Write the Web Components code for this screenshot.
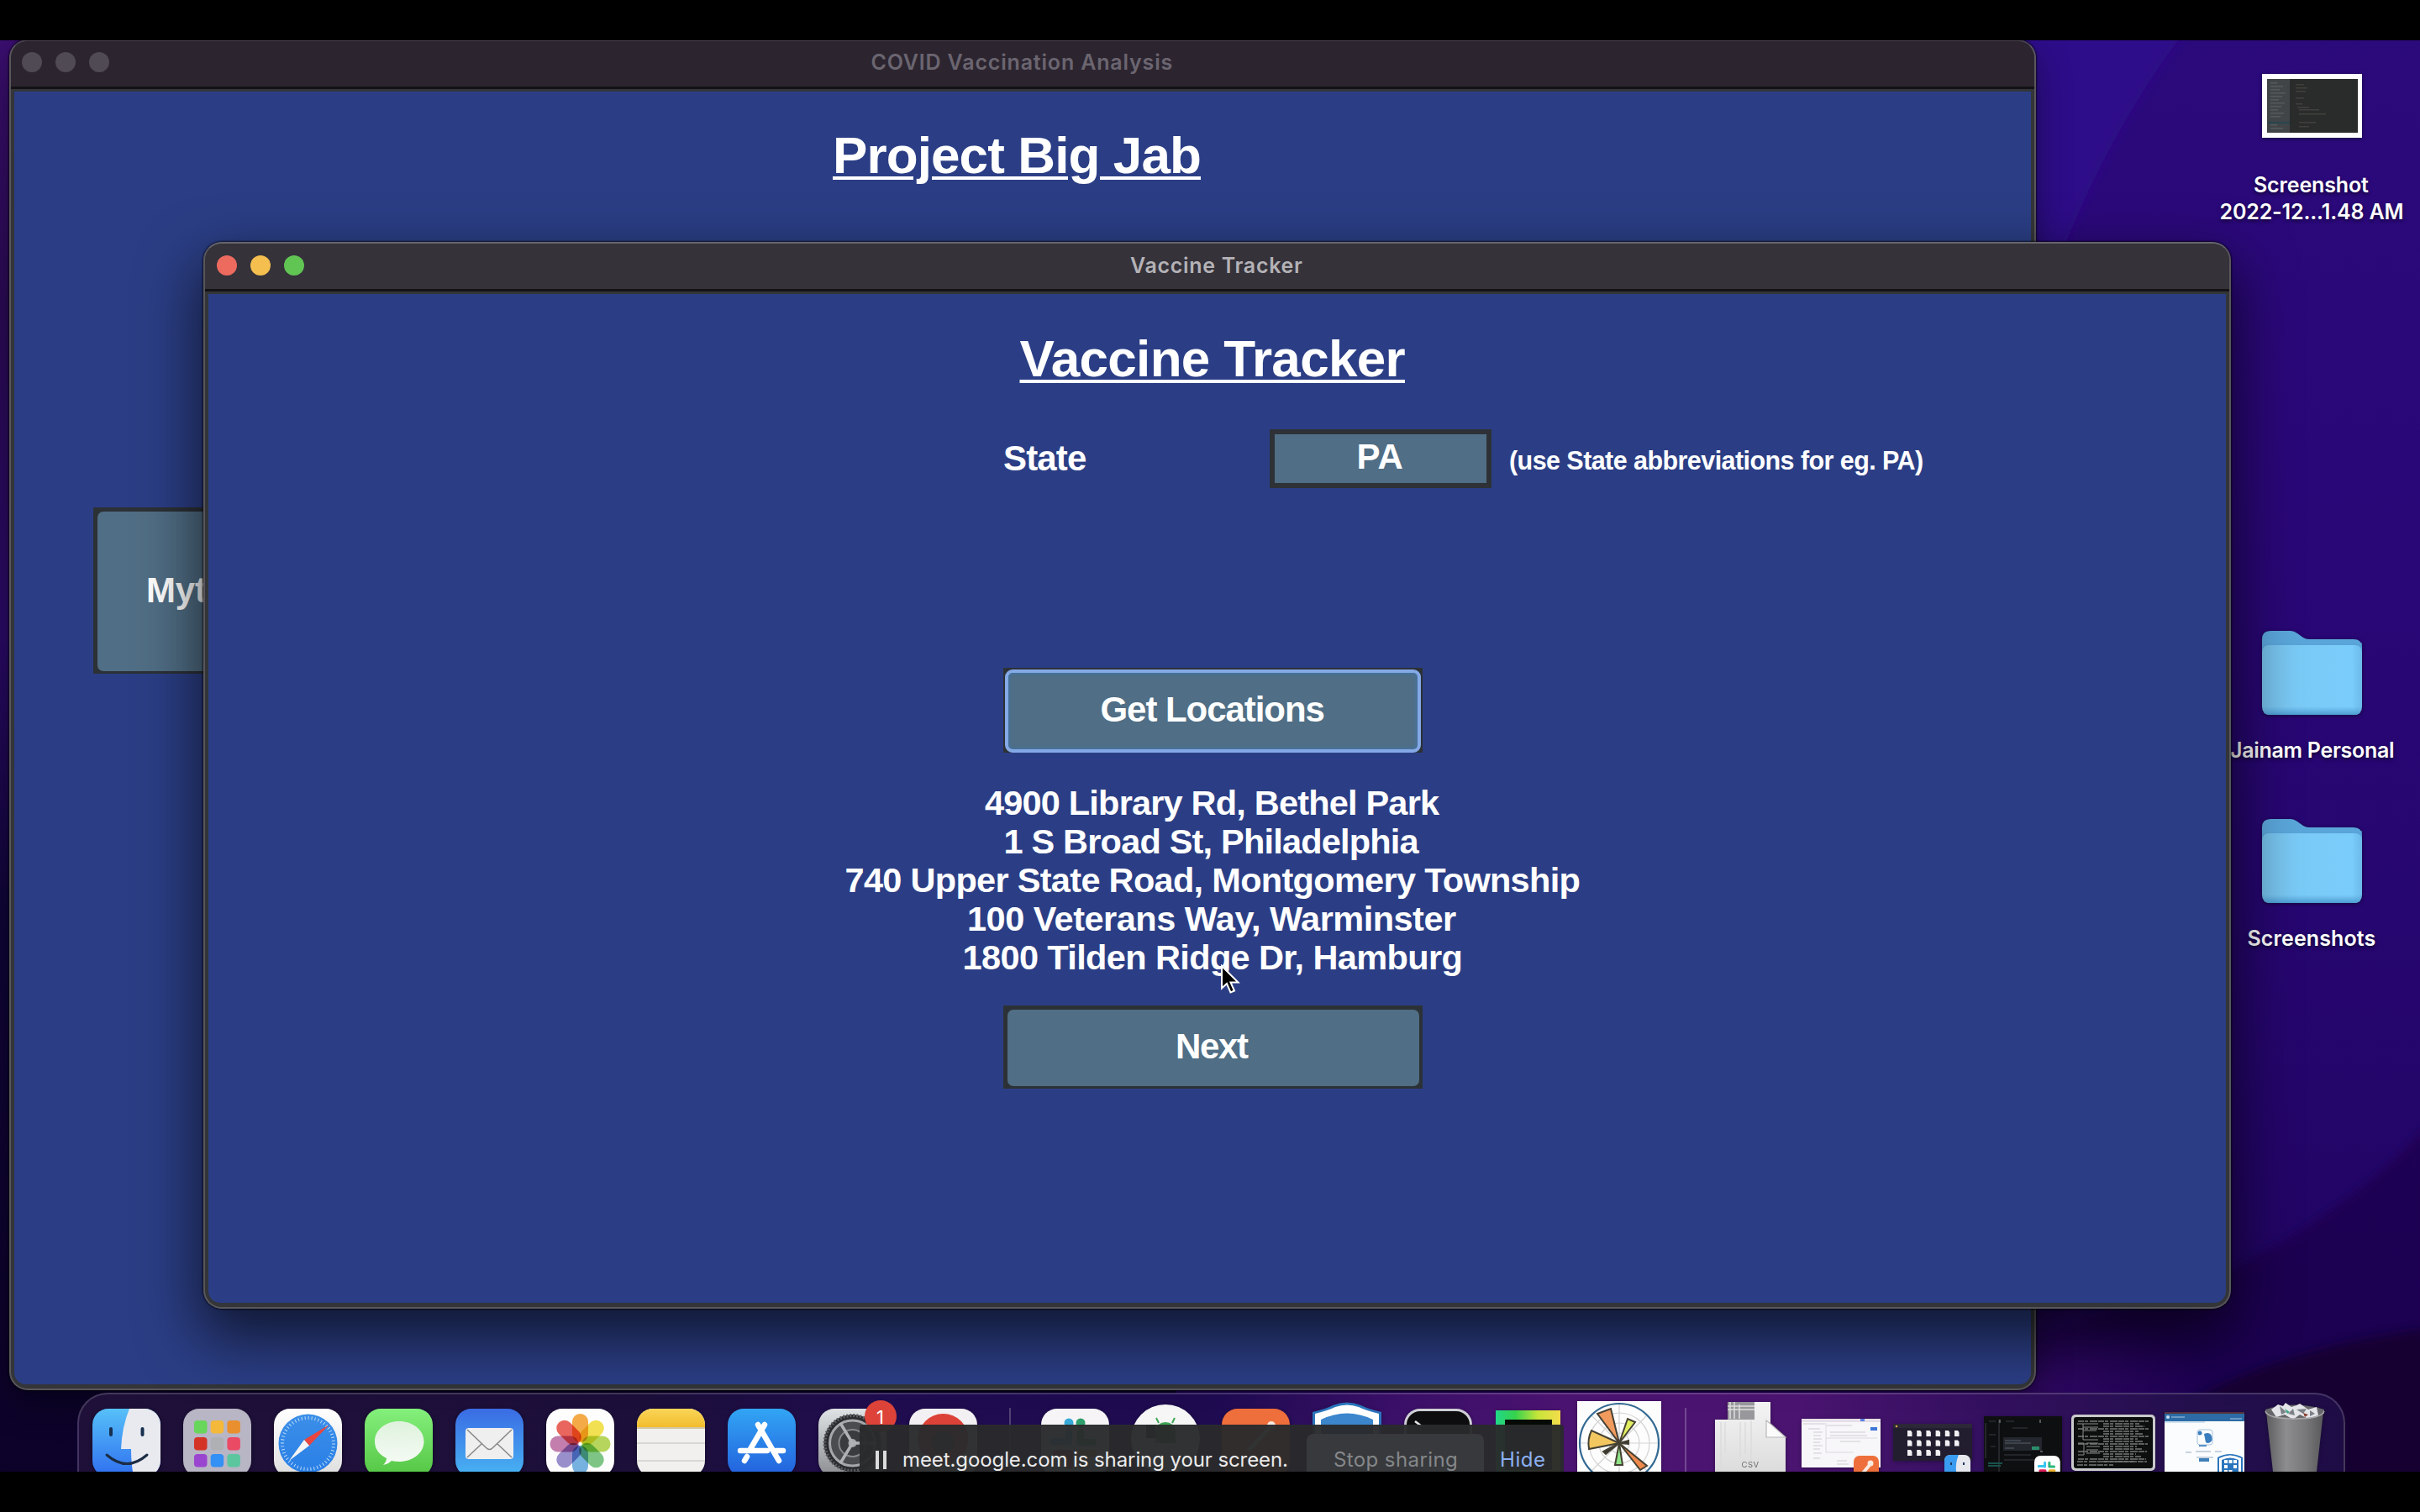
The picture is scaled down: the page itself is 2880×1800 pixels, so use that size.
<!DOCTYPE html>
<html lang="en">
<head>
<meta charset="utf-8">
<title>Vaccine Tracker</title>
<style>
html,body{margin:0;width:2880px;height:1800px;overflow:hidden;background:#000}
</style>
</head>
<body>
<desktop-screen></desktop-screen>
<script>
const SANS = '"Liberation Sans", Arial, sans-serif';
const UI = 'Inter, "Liberation Sans", sans-serif';

class BaseElement extends HTMLElement {
  connectedCallback() {
    if (this.shadowRoot) return;
    this.attachShadow({ mode: 'open' }).innerHTML = this.render();
    this.ready && this.ready();
  }
  a(name, fallback = '') { return this.getAttribute(name) ?? fallback; }
}

/* One line of text whose drawn width is set by letter spacing. */
customElements.define('ink-text', class extends BaseElement {
  render() {
    return `<style>:host{display:block;flex:none;white-space:pre;text-align:left}span{display:block}</style><span></span>`;
  }
  ready() {
    const fs = +this.a('size'), w = +this.a('w'), lh = this.a('lh'), wt = this.a('weight', '700');
    const fam = this.hasAttribute('ui') ? UI : SANS, t = this.a('text');
    const c = document.createElement('canvas').getContext('2d');
    c.font = `${wt} ${fs}px ${fam}`;
    const m = c.measureText(t);
    const ink = m.actualBoundingBoxRight + m.actualBoundingBoxLeft;
    const ls = (w - ink) / Math.max(1, t.length - 1);
    const s = this.shadowRoot.querySelector('span');
    s.textContent = t;
    s.style.cssText = `font:${wt} ${fs}px/${lh}px ${fam};letter-spacing:${ls.toFixed(3)}px;margin-left:${m.actualBoundingBoxLeft.toFixed(2)}px;margin-right:-40px;`;
    if (this.hasAttribute('underline')) s.style.cssText += 'text-decoration:underline;text-decoration-thickness:4px;text-underline-offset:4px;width:max-content;';
    this.style.width = w + 'px';
    this.style.height = lh + 'px';
  }
});

customElements.define('mac-window', class extends BaseElement {
  render() {
    const active = this.hasAttribute('active');
    const dots = active ? ['#ec6a5e', '#f4bf4f', '#61c554'] : ['#504a55', '#504a55', '#504a55'];
    return `<style>
      :host{position:absolute;box-sizing:border-box;border-radius:22px;display:flex;flex-direction:column;overflow:visible;
        box-shadow:0 0 2px 1px rgba(0,0,0,.65),${active ? '0 30px 70px 6px rgba(0,0,0,.62)' : '0 16px 40px rgba(0,0,0,.4)'}}
      .frame{flex:1;display:flex;flex-direction:column;box-sizing:border-box;border:2px solid #59575b;border-top-color:${active ? '#67656b' : '#47414a'};border-radius:22px;overflow:hidden;background:#333538}
      header{height:54px;flex:none;display:flex;justify-content:space-between;align-items:flex-start;background:${active ? '#35323a' : '#2c2530'};border-bottom:3px solid #151216}
      .dots{display:flex;gap:16px;padding:${active ? 14 : 13}px 0 0 ${active ? 14 : 13}px;width:${active ? 186 : 187}px}
      .dots i{width:24px;height:24px;border-radius:50%}
      .side{width:202px}
      .title{color:${active ? '#b4b2b6' : '#6b6570'}}
      .body{flex:1;margin:3px 4px 5px;display:flex;flex-direction:column;align-items:center;background:#2b3e85;border-radius:0 0 14px 14px;color:#fff;padding-right:11px}
    </style>
    <div class="frame"><header><div class="dots">${dots.map(c => `<i style="background:${c}"></i>`).join('')}</div>
      <ink-text class="title" ui weight="600" size="25" lh="${active ? 52 : 51}" w="${this.a('tw')}" text="${this.a('label')}"></ink-text>
      <div class="side"></div></header><div class="body"><slot></slot></div></div>`;
  }
});

customElements.define('tk-button', class extends BaseElement {
  render() {
    const f = this.hasAttribute('focus');
    return `<style>
      :host{display:flex;flex:none;box-sizing:border-box;background:#2c3136;padding:${f ? '2px 2px 0' : '5px 4px 3px 5px'}}
      button{flex:1;display:flex;align-items:center;justify-content:${this.hasAttribute('left') ? 'flex-start' : 'center'};margin:0;padding:0 0 3px ${this.a('left', '0')}px;
        box-sizing:border-box;border:${f ? '4px solid #84a9e6' : '0'};border-radius:${f ? 9 : 7}px;background:#506e85;color:#fff;${f ? 'box-shadow:inset 0 0 4px 1px #3f74a8' : ''}}
    </style><button><ink-text size="42" lh="50" w="${this.a('tw')}" text="${this.a('label')}"></ink-text></button>`;
  }
});

customElements.define('state-form', class extends BaseElement {
  render() {
    return `<style>
      :host{display:flex;align-self:stretch;height:70px;margin:44px 0 0 947px;align-items:flex-start}
      .l{margin-top:10px}.box{margin-left:219px;width:264px;height:70px;box-sizing:border-box;border:6px solid #2e3236;background:#506e85;display:flex;justify-content:center}
      .h{margin:12px 0 0 22px}
    </style>
    <ink-text class="l" size="42" lh="50" w="97" text="State"></ink-text>
    <div class="box"><ink-text size="42" lh="54" w="53" text="PA"></ink-text></div>
    <ink-text class="h" size="30.5" lh="51" w="491" text="(use State abbreviations for eg. PA)"></ink-text>`;
  }
});

customElements.define('location-list', class extends BaseElement {
  render() {
    const rows = [['4900 Library Rd, Bethel Park', 542], ['1 S Broad St, Philadelphia', 493],
      ['740 Upper State Road, Montgomery Township', 873], ['100 Veterans Way, Warminster', 580], ['1800 Tilden Ridge Dr, Hamburg', 591]];
    return `<style>:host{display:flex;flex-direction:column;align-items:center;margin:37px 0 34px}</style>` +
      rows.map(([t, w]) => `<ink-text size="41.5" lh="46" w="${w}" text="${t}"></ink-text>`).join('');
  }
});

customElements.define('wall-paper', class extends BaseElement {
  render() {
    return `<style>:host{display:block;width:2880px;height:1800px}svg{display:block}</style>
    <svg width="2880" height="1800" viewBox="0 0 2880 1800">
      <defs>
        <linearGradient id="r" x1="0" y1="0" x2="0" y2="1"><stop offset="0" stop-color="#2b0a7c"/><stop offset=".3" stop-color="#2a0778"/><stop offset=".6" stop-color="#260670"/><stop offset="1" stop-color="#1f035c"/></linearGradient>
        <linearGradient id="l" x1="0" y1="0" x2="0" y2="1"><stop offset="0" stop-color="#3d0f74"/><stop offset=".2" stop-color="#2b0a55"/><stop offset=".42" stop-color="#2a0a66"/><stop offset=".6" stop-color="#100538"/><stop offset="1" stop-color="#0c0228"/></linearGradient>
        <linearGradient id="d" x1="0" y1="0" x2="0" y2="1"><stop offset="0" stop-color="#200252"/><stop offset="1" stop-color="#1a0050"/></linearGradient>
        <radialGradient id="g"><stop offset="0" stop-color="#2e0860"/><stop offset="1" stop-color="#2e0860" stop-opacity="0"/></radialGradient>
        <filter id="b"><feGaussianBlur stdDeviation="6"/></filter>
      </defs>
      <rect width="2880" height="1800" fill="url(#r)"/>
      <path d="M2400 0H2630Q2520 130 2450 310L2400 470Z" fill="#2e0d8a" filter="url(#b)"/>
      <path d="M2890 1340Q2800 1440 2640 1520L2400 1600V1800H2890Z" fill="url(#d)" filter="url(#b)"/>
      <ellipse cx="2430" cy="1650" rx="200" ry="100" fill="url(#g)"/>
      <path d="M2890 1582Q2740 1600 2630 1655L2560 1690V1800H2890Z" fill="#120032" filter="url(#b)"/>
      <rect width="1400" height="1800" fill="url(#l)"/>
    </svg>`;
  }
});

customElements.define('desktop-file', class extends BaseElement {
  render() {
    const lines = JSON.parse(this.a('lines'));
    const k = this.a('kind');
    const shot = `<svg width="119" height="76" viewBox="0 0 119 76"><rect width="119" height="76" fill="#fff"/><rect x="6" y="6" width="108" height="64" fill="#2a2b2b"/><rect x="6" y="6" width="27" height="64" fill="#414547"/>
      ${[10,14,18,22,26,30,34,38,42,46,50,60,64].map((y, i) => `<rect x="10" y="${y}" width="${8 + (i * 7) % 11}" height="1.6" fill="#54595b"/>`).join('')}
      <rect x="7" y="57" width="26" height="2" fill="#27464f"/>
      ${[[40,12,10],[40,16,14],[40,20,12],[40,28,10],[40,35,8],[42,39,14],[44,42,24],[44,47,32],[44,57,20],[44,62,12]].map(([x,y,w]) => `<rect x="${x}" y="${y}" width="${w}" height="1.5" fill="#41413c"/>`).join('')}</svg>`;
    const folder = `<svg width="119" height="100" viewBox="0 0 119 100"><defs>
      <linearGradient id="f" x1="0" x2="1" y1="0" y2="0"><stop offset="0" stop-color="#74bde6"/><stop offset=".35" stop-color="#7acaf6"/><stop offset=".9" stop-color="#7accfa"/><stop offset="1" stop-color="#6cb9ea"/></linearGradient>
      <linearGradient id="t" x1="0" x2="0" y1="0" y2="1"><stop offset="0" stop-color="#5ba5da"/><stop offset="1" stop-color="#3d8cc7"/></linearGradient>
      <linearGradient id="e" x1="0" x2="0" y1="0" y2="1"><stop offset=".88" stop-color="#55a4d8" stop-opacity="0"/><stop offset="1" stop-color="#4c9bd1"/></linearGradient></defs>
      <path d="M0 10Q0 0 10 0H34Q38 0 42 3L49 8Q52 10 56 10H109Q119 10 119 20V40H0Z" fill="#5aa6da"/>
      <path d="M0 14H119V30H0Z" fill="url(#t)" opacity=".6"/>
      <path d="M0 26Q0 17 9 17H110Q119 17 119 26V90Q119 100 109 100H10Q0 100 0 90Z" fill="url(#f)"/>
      <path d="M0 26Q0 17 9 17H110Q119 17 119 26V90Q119 100 109 100H10Q0 100 0 90Z" fill="url(#e)"/></svg>`;
    return `<style>:host{display:flex;flex-direction:column;align-items:center;color:#fff;text-shadow:0 2px 4px rgba(0,0,0,.6)}
      svg{display:block;filter:drop-shadow(0 1px 2px rgba(0,0,0,.5))}.t{margin-top:${k === 'shot' ? 40 : 26}px}</style>
      ${k === 'shot' ? shot : folder}<div class="t"></div>
      ${lines.map(([t, w]) => `<ink-text ui weight="600" size="25" lh="32" w="${w}" text="${t}"></ink-text>`).join('')}`;
  }
});

const SQ = 'rx="19" width="81" height="81"';
const grad = (id, a, b) => `<linearGradient id="${id}" x1="0" y1="0" x2="0" y2="1"><stop offset="0" stop-color="${a}"/><stop offset="1" stop-color="${b}"/></linearGradient>`;
const slack = `<g stroke-width="8" stroke-linecap="round"><path d="M33 22V34M14 33H33" stroke="#36c5f0"/><path d="M47 22V34M47 34H62" stroke="#2eb67d"/><path d="M34 47H18M34 47V62" stroke="#e01e5a"/><path d="M48 47H63M48 47V62" stroke="#ecb22e"/></g>`;
const ICONS = {
  finder: () => `${grad('a', '#56c0f8', '#2f6ff0')}<clipPath id="c"><rect ${SQ}/></clipPath><g clip-path="url(#c)"><rect width="81" height="81" fill="url(#a)"/><path d="M44 0Q35 22 34 48H46Q46 66 49 81H81V0Z" fill="#e8eaf0"/></g>
    <path d="M22 24V31M59.500 24V31" stroke="#17304f" stroke-width="4" stroke-linecap="round"/><path d="M17 55Q41 76 65 55" fill="none" stroke="#1b2c44" stroke-width="3" stroke-linecap="round"/>`,
  launchpad: () => `<rect ${SQ} fill="#b8b5c5"/>${['#68d65a','#f4b93a','#ea8f2e','#d33426','#aeb0b4','#ea4a63','#9a45cf','#3390f5','#5cc79f'].map((c, i) => `<rect x="${13 + (i % 3) * 19.700}" y="${14 + Math.floor(i / 3) * 20}" width="15.500" height="15.500" rx="4" fill="${c}"/>`).join('')}`,
  safari: () => `${grad('a', '#ffffff', '#dedede')}${grad('b', '#3b8fe8', '#2a7fe6')}<rect ${SQ} fill="url(#a)"/><circle cx="40.500" cy="41.500" r="35" fill="url(#b)"/><circle cx="40.500" cy="41.500" r="30.500" fill="none" stroke="#b9dbf8" stroke-width="4" stroke-dasharray="1 2.990"/>
    <path d="M66 19L36 37L42 44Z" fill="#e8463f"/><path d="M18 62L36 37L42 44Z" fill="#f4f4f4"/>`,
  messages: () => `${grad('a', '#84f07c', '#54c544')}${grad('b', '#dff2dd', '#f6fbf5')}<rect ${SQ} fill="url(#a)"/><path d="M41 15C57 15 70.500 25 70.500 39S57 63 41 63Q36 63 32 62Q28 66 22 67Q26 63 26 59Q12 52 12 39C12 25 25 15 41 15Z" fill="url(#b)"/>`,
  mail: () => `${grad('a', '#3a6ce4', '#48b4f3')}<rect ${SQ} fill="url(#a)"/><rect x="12" y="23" width="57" height="37" rx="4" fill="#efefef"/><path d="M14 25L36 46Q40.500 51 45 46L67 25M14 58L31 42M67 58L50 42" fill="none" stroke="#8a8a8a" stroke-width="1.600"/>`,
  photos: () => `<rect ${SQ} fill="#fdfdfd"/>${['#f39a1e','#f1dc2a','#a9cf3a','#63bb6b','#5aa2dc','#8477c2','#b8629f','#e6453a'].map((c, i) => `<rect x="31" y="6" width="19" height="34" rx="9.500" fill="${c}" opacity=".82" transform="rotate(${i * 45} 40.500 42)" style="mix-blend-mode:multiply"/>`).join('')}`,
  notes: () => `${grad('a', '#f9d558', '#f2bd2e')}<clipPath id="c"><rect ${SQ}/></clipPath><g clip-path="url(#c)"><rect width="81" height="81" fill="#f1f0ee"/><rect width="81" height="22" fill="url(#a)"/><path d="M0 23H81" stroke="#c9b98a" stroke-width="1.500"/><path d="M0 41H81M0 62H81" stroke="#cfcecc" stroke-width="1.500"/></g>`,
  appstore: () => `${grad('a', '#32a5f4', '#2260dd')}<rect ${SQ} fill="url(#a)"/><g stroke="#fff" stroke-width="6.500" stroke-linecap="round"><path d="M44 19L27 48M36 19L61 62M15 50H47M57 50H66M23 57L20 62"/></g>`,
  settings: () => `${grad('a', '#dfe3e6', '#8b8d90')}<rect ${SQ} fill="url(#a)"/><circle cx="40.500" cy="41" r="34" fill="#2a2b2e"/><circle cx="40.500" cy="41" r="33" fill="none" stroke="#5b5d61" stroke-width="4" stroke-dasharray="2 2"/><circle cx="40.500" cy="41" r="27" fill="#4a4c50" stroke="#a5a7aa" stroke-width="3"/><circle cx="40.500" cy="41" r="16" fill="#3a3b3e" stroke="#85878a" stroke-width="2"/><circle cx="40.500" cy="41" r="5" fill="#a5a7aa"/><path d="M40.500 41L26 17M40.500 41L26 65M40.500 41H68" stroke="#b0b2b5" stroke-width="3.500"/>`,
  red: () => `<rect ${SQ} fill="#f2f0f2"/><circle cx="40.500" cy="36" r="30" fill="#dc4238"/><circle cx="40.500" cy="40" r="13" fill="#35507e"/>`,
  slack: () => `<rect ${SQ} fill="#f6f4f6"/><circle cx="33" cy="17" r="5.500" fill="#36a9d8"/><circle cx="47" cy="17" r="5.500" fill="#2f9f6d"/><g transform="translate(0 6)">${slack}</g>`,
  android: () => `<circle cx="41" cy="41" r="41" fill="#f6f6f6"/><path d="M29 32Q31 21 41 21T53 32V46H29Z" fill="#3fa657"/><path d="M33 22L30 16M49 22L52 16" stroke="#3fa657" stroke-width="2"/><path d="M18 40V24H29V40Z" fill="#202326"/>`,
  postman: () => `<rect ${SQ} fill="#ee6f3b"/><circle cx="59" cy="20" r="5" fill="#f7e8de"/><path d="M56 24L32 50" stroke="#f7e8de" stroke-width="5"/>`,
  shield: () => `<path d="M1 12Q18 8 25 4Q42 -3 59 4Q66 8 83 12V82H1Z" fill="#2b75bd"/><path d="M4 14Q20 10 28 6Q42 1 56 6Q64 10 80 14V82H4Z" fill="#fff"/><path d="M11 21Q42 6 73 21V82H11Z" fill="#3b86cd"/>`,
  terminal: () => `<rect ${SQ} fill="#cfcfd6"/><rect x="3" y="3" width="75" height="75" rx="16" fill="#0d0d0f"/><path d="M13 15L21 21" stroke="#e6e6e6" stroke-width="2.500"/>`,
  pycharm: () => `<linearGradient id="a"><stop offset="0" stop-color="#21d789"/><stop offset=".3" stop-color="#35d24c"/><stop offset=".65" stop-color="#c6e53a"/><stop offset="1" stop-color="#f5dc4b"/></linearGradient><rect width="77" height="77" fill="url(#a)"/><rect x="11" y="11" width="56" height="60" fill="#050a05"/>`,
  chart: () => `<rect width="100" height="100" fill="#fdfdfd"/><g fill="none" stroke="#d3d3d3" stroke-width="1.200"><circle cx="50" cy="50" r="12"/><circle cx="50" cy="50" r="24"/><circle cx="50" cy="50" r="36"/><path d="M3 50H97M50 3V97M17 17L83 83M83 17L17 83"/></g><circle cx="50" cy="50" r="47" fill="none" stroke="#336a94" stroke-width="2.200"/>
    <g stroke="#454134" stroke-width="2"><path d="M50 50L24 15L40 9Z" fill="#f09a5e"/><path d="M50 50L60 21L69 25Z" fill="#e2ee62"/><path d="M50 50L17 35Q12 45 14 57Z" fill="#f2c760"/><path d="M50 50L45 76H54Z" fill="#8fe389"/><path d="M50 50L83 77L75 82Z" fill="#ee8a4d"/><path d="M50 50L31 60L34 63ZM50 50L61 47V51Z" fill="#333"/></g>`,
  csv: () => `${grad('a', '#f4f4f4', '#dadada')}<path d="M15 0H66V40H15Z" fill="#98989c"/><path d="M18 0V20M23 0V20M29 3V20M15 5H50M15 9H50" stroke="#dedede" stroke-width="1.500"/><path d="M0 21H47V0H66V26L84 42V90H0Z" fill="url(#a)"/><path d="M66 26L84 42H61V22Z" fill="#fbfbfb" stroke="#b9b9b9" stroke-width="1.200"/><path d="M7 24V84M12 24V60M30 24V66M36 24V62M43 22V70" stroke="#dcdcdc" stroke-width="1.500"/><text x="42" y="78" text-anchor="middle" font-family="Inter, sans-serif" font-size="9.5" letter-spacing=".5" fill="#6a6a6a">CSV</text>`,
  w1: () => `<rect width="94" height="58" fill="#f7f6f9"/><rect width="94" height="4" fill="#e6dfe8"/><rect x="70" y="0" width="5" height="3" fill="#5b7fe0"/><rect x="82" y="10" width="8" height="4" fill="#3e78d8"/><path d="M2 6H28M8 12H22M14 16H25M14 20H23M14 24H24M14 28H22M14 32H25M14 36H22M14 41H24M14 47H22M30 8H60M34 16H76M34 20H78M46 27H70M42 50H54M42 54H56" stroke="#cfcbd4" stroke-width="1.200"/><path d="M29 5V40M29 23H90M29 40H62" stroke="#dcd8e0" stroke-width="1"/><g transform="translate(62 44)"><rect width="30" height="30" rx="7" fill="#ee6f3b"/><circle cx="20" cy="9" r="3.500" fill="#fbe9df"/><path d="M19 11L9 23" stroke="#fbe9df" stroke-width="4"/></g>`,
  w2: () => `<rect width="94" height="44" fill="#221e30"/><rect width="94" height="5" fill="#2c2838"/><circle cx="4" cy="3" r="1.300" fill="#d8a24a"/>${Array.from({ length: 16 }, (_, i) => `<path transform="translate(${17 + (i % 6) * 11.200} ${8 + Math.floor(i / 6) * 11.500})" d="M0 0H4L5.500 2V7H0Z" fill="#f1f1f4"/>`).join('')}
    <g transform="translate(61 37)"><rect width="31" height="30" rx="7" fill="#e6e8ee"/><path d="M7 0H17Q13 9 14 20H0V7Q0 0 7 0Z" fill="#3a9cf0"/><path d="M8 9V12M23 9V12" stroke="#203a5c" stroke-width="2"/></g>`,
  w3: () => `<rect width="93" height="66" fill="#0e0f11"/><path d="M18 4V66M2 8V50" stroke="#24262a" stroke-width="2"/><path d="M6 6H14M26 6H36M34 14H52M6 22H14M8 36H14M24 46H56M24 52H60" stroke="#2a2d31" stroke-width="1.500"/><path d="M5 56H22M5 59H20" stroke="#17514a" stroke-width="2"/><rect x="23" y="25" width="46" height="16" fill="#23272d"/><path d="M25 29H44M25 32H56M25 38H36" stroke="#59606a" stroke-width="1.200"/><rect x="57" y="36" width="9" height="4" fill="#2a8e6b"/><path d="M19 4V8M67 4V8M67 42H70" stroke="#9a9da0"/><g transform="translate(60 47) scale(.38)"><rect ${SQ} fill="#fff"/>${slack}</g>`,
  w4: () => `<rect width="100" height="67" rx="5" fill="#c9cacc"/><rect x="3" y="3" width="94" height="61" rx="3" fill="#0d0e0e"/><g stroke="#777878" stroke-width="1.400" stroke-dasharray="7 1 4 2 9 1">${Array.from({ length: 17 }, (_, i) => `<path d="M${i % 3 ? 38 : 8} ${8 + i * 3}H${94 - (i * 13) % 19}"/>`).join('')}<path d="M7 56H90M7 60H50"/></g><g stroke="#8b8c8c" fill="none"><path d="M7 11H32M14 11V30H32M14 15H32M14 19H30M8 34H15V48H8M18 34H32M18 38H34M18 42H32M18 46H34"/></g>`,
  w5: () => `<rect width="95" height="71" fill="#fbfcfd"/><rect width="95" height="2" fill="#57323c"/><rect y="2" width="95" height="9" fill="#2c6ba5"/><circle cx="4" cy="6" r="2" fill="#cbe0f2"/><path d="M8 6H24M78 8H92M0 12H48" stroke="#a9c9e4" stroke-width="1.200"/><g fill="#3a7dbd"><circle cx="42" cy="25" r="2.500"/><path d="M47 26Q56 22 57 33Q53 39 49 36Z"/><path d="M41 39H50V41H41Z"/></g><rect x="39" y="21" width="18" height="18" rx="3" fill="none" stroke="#a4c3df"/><path d="M25 48H32M37 47H55M60 47H68M38 54H58" stroke="#b6c6d6" stroke-width="1.500"/><rect x="41" y="55" width="12" height="4" fill="#3f7fb8"/>
    <g transform="translate(62 49)"><path d="M1 5Q16 -3 31 5V35H1Z" fill="#2b75bd"/><path d="M3 6Q16 -1 29 6V35H3Z" fill="#fff"/><path d="M6 8Q16 3 26 8V35H6Z" fill="#2b75bd"/><g fill="#fff"><rect x="9" y="8" width="4" height="4"/><rect x="14.500" y="8" width="4" height="4"/><rect x="20" y="8" width="4" height="4"/><rect x="9" y="14" width="4" height="4"/><rect x="20" y="14" width="4" height="4"/><rect x="9" y="20" width="4" height="4"/><rect x="14.500" y="20" width="4" height="4"/></g></g>`,
  trash: () => `<linearGradient id="a"><stop offset="0" stop-color="#5d5d60"/><stop offset=".35" stop-color="#8d8d90"/><stop offset=".7" stop-color="#77777a"/><stop offset="1" stop-color="#59595c"/></linearGradient><path d="M2 12L10 83H62L70 12Q36 24 2 12Z" fill="url(#a)"/><path d="M1 9Q36 -2 71 9V14Q36 24 1 14Z" fill="#66666a"/><path d="M8 9L16 3L22 5L25 1L32 6L38 4L42 2L52 9L62 6L64 16L52 20L42 15L34 21L24 15L14 18Z" fill="#e4e5e8"/><path d="M18 5L26 12L20 15ZM38 9L46 14L50 8ZM28 14L34 8L36 16ZM54 10L60 14L54 17Z" fill="#7c8087"/><path d="M24 8L30 12L27 14Z" fill="#3da386"/><path d="M46 13L52 15L48 18Z" fill="#8b3c2f"/><path d="M1 11Q4 20 36 20T71 11" fill="none" stroke="#a8a8ab" stroke-width="1.500"/>`
};

customElements.define('dock-item', class extends BaseElement {
  render() {
    const w = this.a('w', '81'), h = this.a('h', '85'), k = this.a('kind');
    if (k === 'sep') return `<style>:host{display:block;flex:none;width:2px;height:92px;margin:16px 0 0 ${this.a('ml')}px;background:rgba(255,255,255,.22)}</style>`;
    return `<style>:host{display:block;flex:none;width:${w}px;margin:${this.a('mt', '17')}px 0 0 ${this.a('ml', '27')}px}
      svg{display:block;overflow:visible;filter:drop-shadow(0 1px 2px rgba(0,0,0,.35))}</style>
      <svg width="${w}" height="${h}" viewBox="0 0 ${w} ${h}">${ICONS[k]()}</svg>`;
  }
});

customElements.define('app-dock', class extends BaseElement {
  render() {
    const items = [['finder', 16], ['launchpad'], ['safari'], ['messages'], ['mail'], ['photos'], ['notes'], ['appstore'], ['settings'], ['red'], ['sep', 38],
      ['slack', 36], ['android', 26, 12, 82], ['postman', 26], ['shield', 26, 9, 84], ['terminal', 26], ['pycharm', 28, 19, 77, 77], ['chart', 20, 8, 100, 100], ['sep', 28],
      ['csv', 34, 9, 84, 90], ['w1', 19, 29, 94, 58], ['w2', 15, 35, 94, 44], ['w3', 14, 26, 93, 66], ['w4', 11, 24, 100, 67], ['w5', 11, 21, 95, 71], ['trash', 24, 9, 72, 83]];
    return `<style>:host{display:flex;align-items:flex-start;box-sizing:border-box;width:2699px;height:142px;border:2px solid rgba(255,255,255,.17);border-radius:36px;
      background:linear-gradient(90deg,#1e1038 0,#1c0f3a 25%,#200d50 36%,#1e0b50 50%,#3a1068 58%,#4c1472 66%,#4a1470 76%,#341060 84%,#25104e 93%,#1e0c45)}</style>` +
      items.map(([k, ml = 27, mt = 17, w = 81, h = 85]) => `<dock-item kind="${k}" ml="${ml}" mt="${mt}" w="${w}" h="${h}"></dock-item>`).join('');
  }
});

customElements.define('notify-badge', class extends BaseElement {
  render() {
    return `<style>:host{position:absolute;left:1029px;top:1667px;width:38px;height:38px;border-radius:50%;background:#dd4338;color:#fff;display:flex;justify-content:center}</style>
    <ink-text ui weight="400" size="22" lh="40" w="8" text="1"></ink-text>`;
  }
});

customElements.define('share-bar', class extends BaseElement {
  render() {
    return `<style>:host{position:absolute;left:1023px;top:1696px;width:838px;height:70px;display:flex;align-items:flex-start;background:rgba(41,42,44,.965);border-radius:4px 4px 0 0}
      .p{display:flex;gap:5px;margin:31px 0 0 19px}.p i{width:4px;height:22px;background:#dcdcdd}
      .m{margin:26px 0 0 20px;color:#ebebec}.s{margin:11px 0 0 23px;width:211px;height:60px;border-radius:8px;background:#37393c;display:flex;justify-content:center;color:#85878a}
      .s ink-text{margin-top:15px}.h{margin:26px 0 0 21px;color:#8cb0f3}</style>
      <div class="p"><i></i><i></i></div>
      <ink-text class="m" ui weight="400" size="24" lh="32" w="457" text="meet.google.com is sharing your screen."></ink-text>
      <div class="s"><ink-text ui weight="400" size="24" lh="32" w="145" text="Stop sharing"></ink-text></div>
      <ink-text class="h" ui weight="400" size="24" lh="32" w="51" text="Hide"></ink-text>`;
  }
});

customElements.define('mouse-pointer', class extends BaseElement {
  render() {
    return `<style>:host{position:absolute;left:1452px;top:1148px}svg{display:block}</style>
    <svg width="24" height="36" viewBox="0 0 24 36"><path d="M2 2V28.500L8 23L12.500 33.500L17 31.500L12.500 21.500H21.500Z" fill="#000" stroke="#fff" stroke-width="2"/></svg>`;
  }
});

customElements.define('desktop-screen', class extends BaseElement {
  render() {
    return `<style>
      :host{display:block;position:relative;width:2880px;height:1800px;overflow:hidden;background:#000}
      .files{position:absolute;left:2621px;top:88px;width:260px;display:flex;flex-direction:column}
      .files desktop-file:nth-child(2){margin-top:483px}.files desktop-file:nth-child(3){margin-top:66px}
      app-dock{position:absolute;left:92px;top:1658px}
      .back{left:11px;top:47px;width:2412px;height:1608px}
      .front{left:242px;top:288px;width:2413px;height:1270px}
      .back ink-text{margin-top:36px}.front>ink-text{margin-top:37px}
      .myth{align-self:flex-start;margin:379px 0 0 94px;width:420px;height:198px}
      .get{width:499px;height:101px;margin-top:214px}.next{width:499px;height:99px}
      .bar{position:absolute;left:0;width:2880px;height:48px;background:#000}
    </style>
    <wall-paper style="position:absolute"></wall-paper>
    <div class="files">
      <desktop-file kind="shot" lines='[["Screenshot",136],["2022-12...1.48 AM",217]]'></desktop-file>
      <desktop-file kind="folder" lines='[["Jainam Personal",194]]'></desktop-file>
      <desktop-file kind="folder" lines='[["Screenshots",151]]'></desktop-file>
    </div>
    <mac-window class="back" label="COVID Vaccination Analysis" tw="357">
      <ink-text underline size="62" lh="80" w="433" text="Project Big Jab"></ink-text>
      <tk-button class="myth" left="60" label="Myt" tw="70"></tk-button>
    </mac-window>
    <app-dock></app-dock>
    <mac-window class="front" active label="Vaccine Tracker" tw="205">
      <ink-text underline size="62" lh="80" w="459" text="Vaccine Tracker"></ink-text>
      <state-form></state-form>
      <tk-button class="get" focus label="Get Locations" tw="265"></tk-button>
      <location-list></location-list>
      <tk-button class="next" label="Next" tw="85"></tk-button>
    </mac-window>
    <notify-badge></notify-badge>
    <share-bar></share-bar>
    <mouse-pointer></mouse-pointer>
    <div class="bar" style="top:0"></div><div class="bar" style="top:1752px"></div>`;
  }
});
</script>
</body>
</html>
